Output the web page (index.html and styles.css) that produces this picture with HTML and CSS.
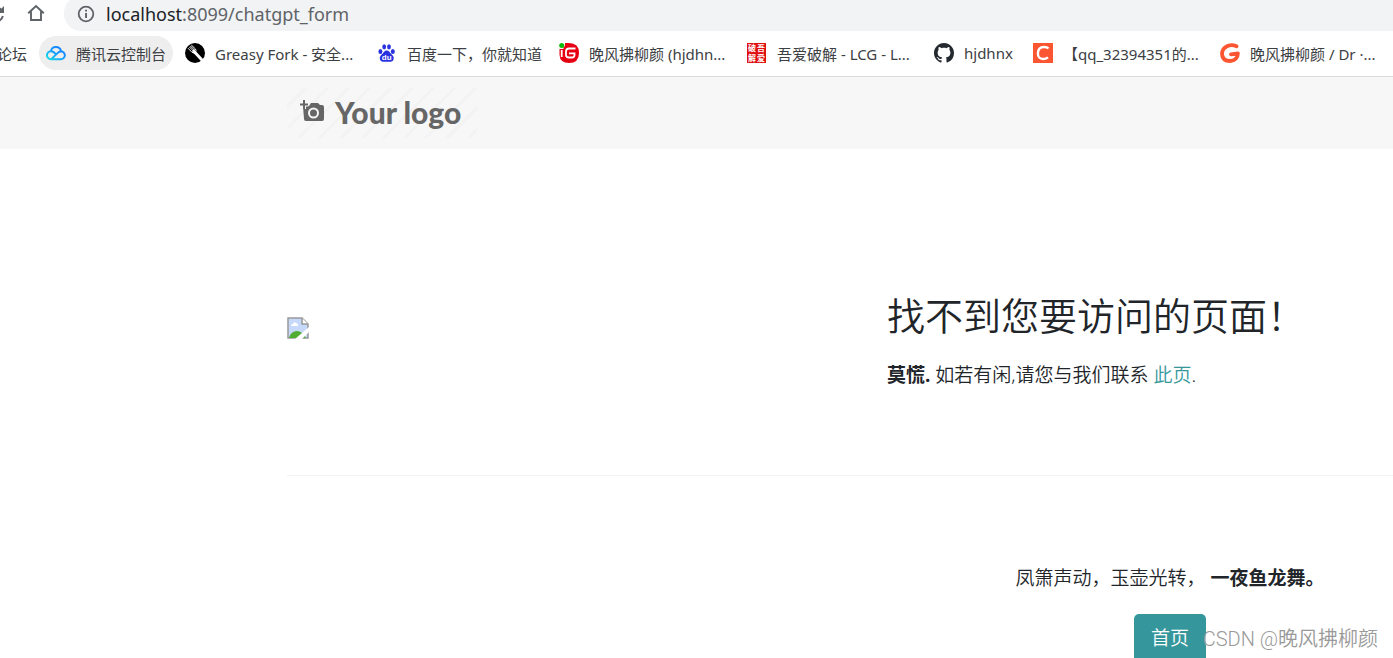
FILE: index.html
```html
<!DOCTYPE html>
<html lang="zh-CN">
<head>
<meta charset="utf-8">
<title>找不到您要访问的页面</title>
<link rel="stylesheet" href="styles.css">
</head>
<body>
<div class="toolbar">
  <button class="tool reload" aria-label="刷新"><svg width="20" height="20" viewBox="0 0 20 20"><path d="M15.600 6.400A7 7 0 1 0 16.800 12" fill="none" stroke="#5f6368" stroke-width="2"/><path d="M18 2v7h-7z" fill="#5f6368"/></svg></button>
  <button class="tool home" aria-label="主页"><svg width="18" height="18" viewBox="0 0 18 18"><path d="M1.200 9.300 9 2l7.800 7.300M4 7.500V16h10V7.500" fill="none" stroke="#5f6368" stroke-width="1.900"/></svg></button>
  <div class="address">
    <svg width="18" height="18" viewBox="0 0 18 18"><circle cx="9" cy="9" r="7.300" fill="none" stroke="#5f6368" stroke-width="1.800"/><path d="M8.100 8h1.900v5H8.100zM8.100 4.800h1.900v1.800H8.100z" fill="#5f6368"/></svg>
    <span class="url"><span class="host">localhost</span>:8099/chatgpt_form</span>
  </div>
</div>
<nav class="bookmarks">
  <a class="mark cut" href="#">论坛</a>
  <a class="mark active" href="#"><svg class="fav" viewBox="0 0 20 20"><defs><linearGradient id="cloud" x1="0" y1="1" x2="1" y2="0"><stop offset="0" stop-color="#19dfe2"/><stop offset=".5" stop-color="#159cff"/><stop offset="1" stop-color="#1479ff"/></linearGradient></defs><path d="M5.200 16.200A4 4 0 1 1 7.500 9.100L10.500 11.800M5.200 16.200H15a3.900 3.900 0 1 0-2.700-6.800L5.200 16.200M4.900 8.100A5.200 5.200 0 0 1 15 7.900" fill="none" stroke="url(#cloud)" stroke-width="2"/></svg><span>腾讯云控制台</span></a>
  <a class="mark" href="#"><svg class="fav" viewBox="0 0 20 20"><circle cx="10" cy="10" r="10" fill="#000"/><path d="M10 9.500 16.500 16.500" stroke="#fff" stroke-width="3" stroke-linecap="round"/><path d="M3 5.200 7 9.300q2 1.300 3.400-.1 1.300-1.500 0-3.300L6.300 2M4.300 3.900l4 4M5.300 2.900l4 4" fill="none" stroke="#fff" stroke-width="1"/><path d="m7 8 2-2 2.500 3.500-2 1.500z" fill="#fff"/></svg><span>Greasy Fork - 安全...</span></a>
  <a class="mark" href="#"><svg class="fav" viewBox="0 0 20 20"><g fill="#2932e1"><ellipse cx="3.400" cy="8.400" rx="2" ry="2.500"/><ellipse cx="7.200" cy="3.800" rx="1.900" ry="2.600"/><ellipse cx="12" cy="3.800" rx="1.900" ry="2.600"/><ellipse cx="15.800" cy="8.400" rx="2" ry="2.500"/><path d="M9.700 7.500c2.400 0 3.100 2.200 4.800 3.800 1.500 1.500 2.600 2.500 2.100 4.900-.5 2.400-2.600 2.800-6.900 2.500-4.200.3-6.300-.1-6.800-2.500-.5-2.200.6-3.400 2.100-4.900C6.700 9.700 7.400 7.500 9.700 7.500z"/></g><text class="du" x="9.700" y="17" text-anchor="middle">du</text></svg><span>百度一下，你就知道</span></a>
  <a class="mark" href="#"><svg class="fav" viewBox="0 0 20 20"><path d="M6 0h4q10 0 10 10 0 10-10 10Q1 20 .500 12V6h4V4q1.500 0 1.500-2z" fill="#e60012"/><circle cx="2.700" cy="2.500" r="2.500" fill="#0aba07"/><path d="M2.700 7v7M16.500 5.500H10Q7 5.500 7 8.500v3.500q0 2.500 3 2.500h3q2.500 0 2.500-2.500v-1.700H10" fill="none" stroke="#fff" stroke-width="1.800"/></svg><span>晚风拂柳颜 (hjdhn...</span></a>
  <a class="mark" href="#"><svg class="fav" viewBox="0 0 20 20"><path d="M0 0h19v20H0z" fill="#e01010"/><g class="seal"><text x="1" y="8">破</text><text x="10" y="8">吾</text><text x="1" y="18">解</text><text x="10" y="18">爱</text></g></svg><span>吾爱破解 - LCG - L...</span></a>
  <a class="mark" href="#"><svg class="fav" viewBox="0 0 16 16"><path fill="#24292f" d="M8 0C3.580 0 0 3.580 0 8c0 3.540 2.290 6.530 5.470 7.590.4.070.55-.17.55-.38 0-.19-.01-.82-.01-1.490-2.010.37-2.530-.49-2.690-.94-.09-.23-.48-.94-.82-1.130-.28-.15-.68-.52-.01-.53.63-.01 1.080.58 1.230.82.72 1.210 1.870.87 2.330.66.070-.52.28-.87.51-1.070-1.780-.2-3.640-.89-3.640-3.950 0-.87.31-1.590.82-2.150-.08-.2-.36-1.020.08-2.120 0 0 .67-.21 2.200.82.64-.18 1.320-.27 2-.27s1.360.09 2 .27c1.530-1.040 2.200-.82 2.200-.82.44 1.100.16 1.920.08 2.120.51.56.82 1.270.82 2.150 0 3.070-1.870 3.750-3.650 3.950.29.25.54.73.54 1.480 0 1.070-.01 1.930-.01 2.200 0 .21.15.46.55.38A8.010 8.010 0 0 0 16 8c0-4.420-3.580-8-8-8z"/></svg><span>hjdhnx</span></a>
  <a class="mark" href="#"><svg class="fav" viewBox="0 0 20 20"><path d="M0 0h20v20H0z" fill="#fc5531"/><path d="M15.500 5.600Q14.200 4 11 4C7 4 5 6.500 4.900 10.400 4.800 14 6.800 16 10 16q3 0 5-1.700" fill="none" stroke="#fff" stroke-width="2.400"/></svg><span>【qq_32394351的...</span></a>
  <a class="mark" href="#"><svg class="fav" viewBox="0 0 20 20"><path d="M16.500 3.300Q12 1.300 7.500 3 2 5.500 2 11 2.500 18 10 18q7.500-.5 7.900-7.500L11 11.300" fill="none" stroke="#fc5531" stroke-width="3.800" stroke-linecap="round" stroke-linejoin="round"/></svg><span>晚风拂柳颜 / Dr ·...</span></a>
</nav>
<header class="site-header">
  <a class="logo" href="#">
    <svg width="24" height="24" viewBox="0 0 24 24"><path d="M3 6h6l2-3h7l2 2h2q2 0 2 2v12q0 2-2 2H6q-2 0-2-2z" fill="#666"/><path d="M4 0v9M0 4.500h8.500" stroke="#f7f7f7" stroke-width="4"/><path d="M4 0v9M0 4.500h8" stroke="#666" stroke-width="2"/><circle cx="13.500" cy="13" r="4.500" fill="#666" stroke="#f7f7f7" stroke-width="2"/></svg>
    <span>Your logo</span>
  </a>
</header>
<main>
  <section class="notice">
    <div class="picture"><svg width="22" height="22" viewBox="0 0 22 22"><path d="M1 1h14l6 6v14H1z" fill="#c6d9fb" stroke="#999" stroke-width="1.500"/><path d="M2 21q2-7 8-7 5 0 9 7z" fill="#50ad32"/><path d="M4 9q0-2 2-2 1-3 3-1 2 0 2 3z" fill="#fff"/><path d="M15 1v6h6" fill="#fff" stroke="#999" stroke-width="1.500"/><path d="M8 22 22 10v5l-7 7z" fill="#fff"/></svg></div>
    <div class="message">
      <h1>找不到您要访问的页面！</h1>
      <p><strong>莫慌.</strong> 如若有闲,请您与我们联系 <a href="#">此页</a>.</p>
    </div>
  </section>
  <section class="closing">
    <p>凤箫声动，玉壶光转， <strong>一夜鱼龙舞。</strong></p>
    <button class="primary">首页</button>
  </section>
</main>
<div class="watermark">CSDN @晚风拂柳颜</div>
</body>
</html>
```
FILE: styles.css
```css
* { box-sizing: border-box; }
html, body { height: 100%; }
body {
  margin: 0;
  position: relative;
  overflow: hidden;
  background: #fff;
  color: #212529;
  font-family: "Noto Sans", "Noto Sans CJK SC", sans-serif;
  font-size: 19px;
}
a { text-decoration: none; color: inherit; }
button { border: 0; padding: 0; background: none; font: inherit; }
svg { display: block; flex: none; }

.toolbar { display: flex; align-items: flex-end; height: 31px; overflow: hidden; }
.tool { display: flex; align-items: flex-start; height: 27px; }
.reload { width: 27px; margin-left: -14px; margin-right: 14px; }
.home { width: 18px; margin-right: 19px; }
.address {
  flex: 1;
  display: flex;
  align-items: center;
  gap: 11px;
  height: 35px;
  padding-left: 13px;
  border-radius: 17px 0 0 17px;
  background: #f1f3f4;
  color: #5f6368;
  font-size: 18px;
}
.host { color: #202124; }

.bookmarks {
  display: grid;
  grid-template-columns: 39px 139px 192px 182px 188px 187px 99px 187px 1fr;
  align-items: center;
  height: 46px;
  padding-bottom: 1px;
  border-bottom: 1px solid #dadce0;
  color: #3c4043;
  font-size: 15px;
  white-space: nowrap;
}
.mark {
  display: flex;
  align-items: center;
  justify-self: start;
  gap: 10px;
  height: 34px;
  padding: 0 7px;
  border-radius: 17px;
}
.cut { justify-self: end; padding: 0 12px 0 0; }
.active { background: #eee; }
.fav { width: 20px; height: 20px; }
.du { font: bold 8px "Liberation Sans", sans-serif; fill: #fff; }
.seal { font: bold 8px "Noto Sans CJK SC", sans-serif; fill: #fff; }

.site-header { display: flex; padding: 11px 0 11px 287px; background: #f7f7f7; }
.logo {
  display: flex;
  align-items: center;
  gap: 11px;
  width: 190px;
  height: 50px;
  padding-left: 13px;
  padding-bottom: 2px;
  background: repeating-linear-gradient(135deg, #f7f7f7 0 12px, #f3f3f3 12px 15px);
  color: #666;
  font: 900 30px Lato, sans-serif;
}

main { padding-left: 287px; }
.notice {
  display: grid;
  grid-template-columns: 600px 1fr;
  align-items: center;
  height: 327px;
  padding-top: 31px;
  border-bottom: 1px solid #f2f2f2;
}
.message { padding-top: 26px; }
h1 { margin: 0 0 23px; font-size: 38px; font-weight: 350; line-height: 46px; white-space: nowrap; }
p { margin: 0; line-height: 29px; font-weight: 350; }
.message a { color: #35979c; }
strong { font-weight: 700; }
.closing {
  display: flex;
  flex-direction: column;
  align-items: center;
  gap: 21px;
  width: 446px;
  margin-left: auto;
  padding-top: 88px;
}
.primary {
  padding: 10px 17px;
  border-radius: 5px;
  background: #35979c;
  color: #fff;
  font-weight: 350;
  line-height: 29px;
}
.watermark {
  position: absolute;
  right: 15px;
  bottom: 4px;
  color: #999;
  font-family: Roboto, "Noto Sans CJK SC", sans-serif;
  font-size: 20px;
  font-weight: 350;
  line-height: 29px;
  text-shadow: 1px 1px 1px #fff;
}
```
